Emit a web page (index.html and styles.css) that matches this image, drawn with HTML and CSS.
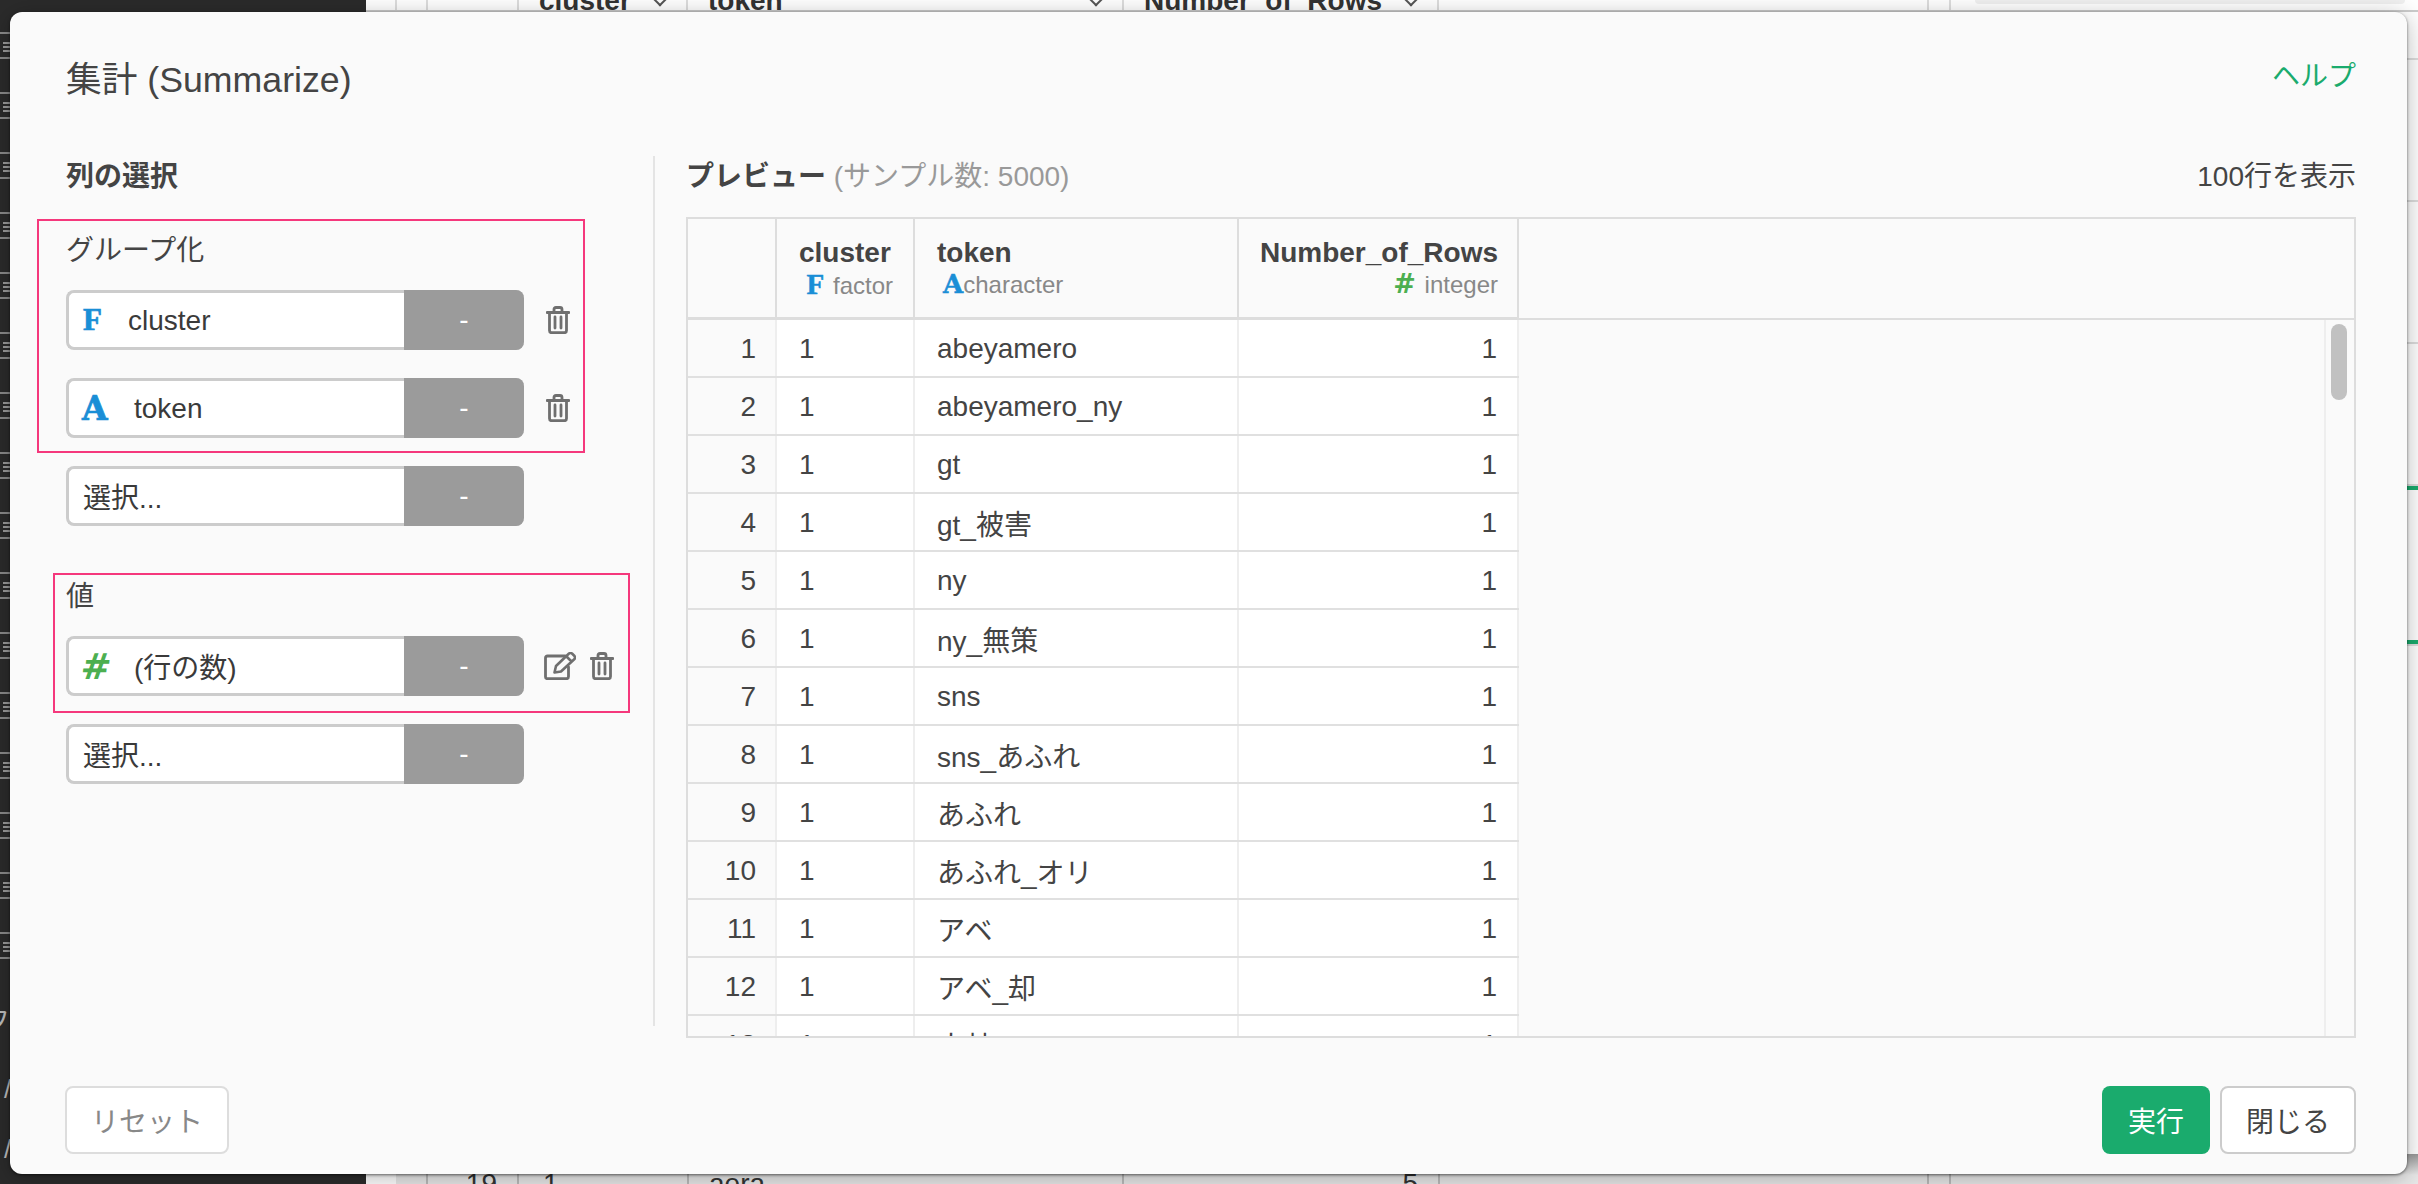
FILE: index.html
```html
<!DOCTYPE html>
<html lang="ja">
<head>
<meta charset="utf-8">
<title>集計 (Summarize)</title>
<link rel="stylesheet" href="styles.css">
</head>
<body>
<svg class="defs" width="0" height="0" aria-hidden="true">
  <symbol id="trash" viewBox="0 0 24 28">
    <path d="M1 6.5h22M8 6V3.5Q8 1.500 10 1.500h4Q16 1.500 16 3.500V6M3.500 7v17.500Q3.500 26.700 5.500 26.700h13Q20.500 26.700 20.500 24.500V7M9 11v11M15 11v11" fill="none" stroke="#6f6f6f" stroke-width="2.800" stroke-linecap="round"/>
  </symbol>
  <symbol id="edit" viewBox="0 0 32 28">
    <path d="M21 4H3.500Q1.500 4 1.500 6v19Q1.500 26.700 3.500 26.700h19Q24.500 26.700 24.500 24.500V15" fill="none" stroke="#6f6f6f" stroke-width="2.800" stroke-linecap="round"/>
    <path d="M10.500 20.500l1.500-6.500L25 1.500q1.500-1 3 0l2.500 2.500q1 1.500 0 3L17 19.500zM22.500 4.500l5.500 5.500" fill="none" stroke="#6f6f6f" stroke-width="2.600" stroke-linejoin="round"/>
  </symbol>
</svg>

<div class="app">
  <aside class="side">
    <div class="side-list"></div>
    <div class="side-text side-kana">フ</div>
    <div class="side-text side-a">く/</div>
    <div class="side-text side-b">く/</div>
  </aside>
  <main class="main">
    <div class="bg-head">
      <div class="bg-c bg-w31"></div>
      <div class="bg-c bg-w31"></div>
      <div class="bg-c bg-w91"></div>
      <div class="bg-c bg-w169">cluster<span class="chev"></span></div>
      <div class="bg-c bg-w436">token<span class="chev"></span></div>
      <div class="bg-c bg-w315">Number_of_Rows<span class="chev"></span></div>
      <div class="bg-c bg-w490"></div>
      <div class="bg-c bg-w22"></div>
      <div class="bg-panel"></div>
    </div>
    <div class="bg-rail">
      <div class="rail-line g1"></div>
      <div class="rail-line g2"></div>
    </div>
    <div class="bg-foot">
      <div class="ft ft-w32"></div>
      <div class="ft ft-w91 ft-num">19</div>
      <div class="ft ft-w170">1</div>
      <div class="ft ft-w435">aera</div>
      <div class="ft ft-w316 ft-num">5</div>
      <div class="ft ft-w489"></div>
      <div class="ft ft-w22"></div>
    </div>
  </main>
</div>

<section class="modal">
  <header class="modal-head">
    <h1 class="title">集計 (Summarize)</h1>
    <a class="help">ヘルプ</a>
  </header>

  <div class="modal-body">
    <div class="left">
      <h2 class="heading left-heading">列の選択</h2>
      <div class="label">グループ化</div>
      <div class="row">
        <div class="sel"><span class="type f">F</span><span class="sel-text t1">cluster</span><span class="sel-btn">-</span></div>
        <svg class="ico trash"><use href="#trash"/></svg>
      </div>
      <div class="row">
        <div class="sel"><span class="type a">A</span><span class="sel-text t2 t-low">token</span><span class="sel-btn">-</span></div>
        <svg class="ico trash"><use href="#trash"/></svg>
      </div>
      <div class="row">
        <div class="sel"><span class="sel-text t0">選択...</span><span class="sel-btn">-</span></div>
      </div>
      <div class="label label-val">値</div>
      <div class="row">
        <div class="sel"><span class="type h">#</span><span class="sel-text t2">(行の数)</span><span class="sel-btn">-</span></div>
        <svg class="ico edit"><use href="#edit"/></svg>
        <svg class="ico trash trash-b"><use href="#trash"/></svg>
      </div>
      <div class="row">
        <div class="sel"><span class="sel-text t0">選択...</span><span class="sel-btn">-</span></div>
      </div>
      <div class="mark mark-a"></div>
      <div class="mark mark-b"></div>
    </div>

    <div class="right">
      <div class="right-head">
        <h2 class="heading">プレビュー <span class="sample">(サンプル数: 5000)</span></h2>
        <span class="count">100行を表示</span>
      </div>
      <div class="grid">
        <div class="grid-head">
          <div class="hc"></div>
          <div class="hc"><b>cluster</b><span class="sub sub-r"><i class="mini f">F</i> factor</span></div>
          <div class="hc"><b>token</b><span class="sub sub-l"><i class="mini a">A</i>character</span></div>
          <div class="hc hc-num"><b>Number_of_Rows</b><span class="sub"><i class="mini h">#</i> integer</span></div>
        </div>
        <div class="grid-body">
          <div class="rows">
            <div class="tr"><span>1</span><span>1</span><span>abeyamero</span><span>1</span></div>
            <div class="tr"><span>2</span><span>1</span><span>abeyamero_ny</span><span>1</span></div>
            <div class="tr"><span>3</span><span>1</span><span>gt</span><span>1</span></div>
            <div class="tr"><span>4</span><span>1</span><span>gt_被害</span><span>1</span></div>
            <div class="tr"><span>5</span><span>1</span><span>ny</span><span>1</span></div>
            <div class="tr"><span>6</span><span>1</span><span>ny_無策</span><span>1</span></div>
            <div class="tr"><span>7</span><span>1</span><span>sns</span><span>1</span></div>
            <div class="tr"><span>8</span><span>1</span><span>sns_あふれ</span><span>1</span></div>
            <div class="tr"><span>9</span><span>1</span><span>あふれ</span><span>1</span></div>
            <div class="tr"><span>10</span><span>1</span><span>あふれ_オリ</span><span>1</span></div>
            <div class="tr"><span>11</span><span>1</span><span>アベ</span><span>1</span></div>
            <div class="tr"><span>12</span><span>1</span><span>アベ_却</span><span>1</span></div>
            <div class="tr"><span>13</span><span>1</span><span>大林</span><span>1</span></div>
          </div>
          <div class="scroll"><div class="thumb"></div></div>
        </div>
      </div>
    </div>
  </div>

  <footer class="modal-foot">
    <button class="btn btn-reset">リセット</button>
    <div class="foot-right">
      <button class="btn btn-run">実行</button>
      <button class="btn btn-close">閉じる</button>
    </div>
  </footer>
</section>
</body>
</html>
```

FILE: styles.css
```css
* { box-sizing: border-box; }
html, body { margin: 0; height: 100%; overflow: hidden; }
body {
  width: 2418px; height: 1184px; position: relative;
  font-family: "Liberation Sans", "Noto Sans CJK JP", sans-serif;
  font-size: 28px; color: #444; background: #fff;
}
.defs { position: absolute; }

/* app behind the dialog */
.app { display: flex; width: 2418px; height: 1184px; }
.side { width: 366px; background: #2b2b2b; position: relative; flex: none; overflow: hidden; }
.side-list {
  margin-top: 32px; height: 960px;
  background:
    repeating-linear-gradient(to bottom, transparent 0 10px, #999 10px 12px, transparent 12px 14px, #999 14px 16px, transparent 16px 18px, #999 18px 20px, transparent 20px 60px) 3px 0 / 7px 100% no-repeat,
    repeating-linear-gradient(to bottom, #8a8a8a 0 2px, transparent 2px 25px, #8a8a8a 25px 27px, transparent 27px 60px) 0 0 / 10px 100% no-repeat;
}
.side-text { position: absolute; color: #bbb; font-size: 26px; line-height: 30px; white-space: nowrap; }
.side-kana { top: 1006px; left: -16px; }
.side-a { top: 1074px; left: -22px; }
.side-b { top: 1134px; left: -22px; }
.main { flex: 1; position: relative; display: flex; flex-direction: column; justify-content: space-between; background: #fff; }
.bg-head { display: flex; height: 12px; border-bottom: 2px solid #ccc; overflow: hidden; }
.bg-c { height: 12px; line-height: 2px; font-weight: 700; color: #333; border-right: 2px solid #ddd; flex: none; padding-left: 20px; position: relative; }
.bg-w31 { width: 31px; }
.bg-w91 { width: 91px; }
.bg-w169 { width: 169px; }
.bg-w436 { width: 436px; }
.bg-w315 { width: 315px; }
.bg-w490 { width: 490px; }
.bg-w22 { width: 22px; }
.bg-panel { position: absolute; left: 1609px; top: 0; width: 430px; height: 4px; background: #f0f0f0; border-radius: 0 0 6px 6px; }
.chev { position: absolute; right: 20px; top: -8px; width: 12px; height: 12px; border-right: 2px solid #555; border-bottom: 2px solid #555; transform: rotate(45deg); }
.bg-rail { position: absolute; right: 0; top: 0; width: 12px; height: 700px; background: repeating-linear-gradient(to bottom, transparent 0 58px, #ddd 58px 60px, transparent 60px 142px) 0 0 / 100% 400px no-repeat; }
.rail-line { position: absolute; left: 0; right: 0; height: 4px; background: #1aab6d; }
.g1 { top: 486px; box-shadow: 0 -2px 0 #ddd; }
.g2 { top: 640px; box-shadow: 0 2px 0 #ddd; }
.bg-foot { display: flex; height: 30px; margin-left: 30px; background: linear-gradient(#999, #e8e8e8 70%); color: #333; overflow: hidden; }
.ft { border-right: 2px solid #bbb; padding: 0 20px; line-height: 60px; flex: none; }
.ft-w32 { width: 32px; padding: 0; }
.ft-w91 { width: 91px; }
.ft-w170 { width: 170px; padding-left: 24px; }
.ft-w435 { width: 435px; }
.ft-w316 { width: 316px; }
.ft-w489 { width: 489px; }
.ft-w22 { width: 22px; padding: 0; }
.ft-num { text-align: right; }

/* dialog */
.modal {
  position: absolute; left: 10px; top: 12px; width: 2397px; height: 1162px;
  background: #fafafa; border-radius: 12px;
  box-shadow: 0 1px 3px rgba(0,0,0,.55), 0 4px 24px rgba(0,0,0,.28);
  padding: 0 51px 0 56px;
  display: flex; flex-direction: column;
}
.modal-head { height: 144px; display: flex; justify-content: space-between; flex: none; padding-top: 46px; }
.title { margin: 0; font-size: 35.7px; font-weight: 400; line-height: 44px; color: #444; }
.help { color: #1aab6d; font-size: 28px; line-height: 44px; margin-top: -3px; }
.modal-body { display: flex; height: 882px; flex: none; align-items: flex-start; }

.left { width: 589px; height: 870px; border-right: 2px solid #e4e4e4; position: relative; flex: none; }
.heading { margin: 0; font-size: 28px; font-weight: 700; line-height: 42px; color: #444; }
.left-heading { margin-bottom: 32px; }
.label { line-height: 42px; margin-bottom: 18px; color: #444; }
.label-val { margin-top: 50px; }
.row { display: flex; align-items: center; height: 60px; margin-bottom: 28px; }
.sel { width: 458px; height: 60px; display: flex; align-items: center; background: #fff; border: 3px solid #ccc; border-right: 0; border-radius: 8px; position: relative; flex: none; }
.sel-text { color: #3a3a3a; flex: 1; white-space: nowrap; }
.t0 { padding-left: 14px; }
.t1 { padding: 2px 0 0 22px; }
.t2 { padding-left: 26px; }
.t-low { padding-top: 2px; }
.sel-btn { width: 120px; align-self: stretch; margin: -3px 0; display: flex; align-items: center; justify-content: center; background: #9b9b9b; color: #fff; border-radius: 0 8px 8px 0; font-size: 28px; flex: none; }
.type { font-weight: 700; color: #1a8ed6; flex: none; padding-left: 14px; -webkit-text-stroke: .7px currentColor; }
.type.f { font-family: "Liberation Serif", serif; font-size: 31px; width: 37px; }
.type.a { font-family: "DejaVu Serif", serif; font-size: 33px; padding-left: 13px; width: 39px; }
.type.h { font-family: "DejaVu Sans", sans-serif; font-size: 36px; color: #4caf50; width: 39px; padding-left: 12px; transform: skewX(-6deg); -webkit-text-stroke: 0; }
.ico { flex: none; height: 28px; }
.trash { width: 24px; margin-left: 22px; }
.edit { width: 32px; margin-left: 20px; }
.trash-b { margin-left: 14px; }
.mark { position: absolute; border: 2px solid #f5387c; pointer-events: none; }
.mark-a { left: -29px; top: 63px; width: 548px; height: 234px; }
.mark-b { left: -13px; top: 417px; width: 577px; height: 140px; }

.right { flex: 1; padding-left: 31px; min-width: 0; }
.right-head { display: flex; justify-content: space-between; align-items: flex-start; height: 42px; margin-bottom: 19px; }
.sample { font-weight: 400; color: #999; }
.count { color: #444; line-height: 42px; }
.grid { height: 821px; border: 2px solid #ddd; display: flex; flex-direction: column; overflow: hidden; }
.grid-head { display: grid; grid-template-columns: 89px 138px 324px 280px; height: 101px; flex: none; box-shadow: inset 0 -2px 0 #ddd; }
.hc { height: 101px; border-right: 2px solid #ddd; border-bottom: 3px solid #ddd; padding: 18px 19px 0 22px; display: flex; flex-direction: column; line-height: 32px; color: #444; }
.hc b { font-weight: 700; white-space: nowrap; }
.hc-num { text-align: right; padding-left: 10px; }
.sub { font-size: 24px; color: #888; line-height: 30px; white-space: nowrap; }
.sub-r { text-align: right; margin-right: 1px; }
.sub-l { padding-left: 6px; }
.mini { font-style: normal; font-weight: 700; color: #1a8ed6; }
.mini.f { font-family: "Liberation Serif", serif; font-size: 29px; margin-right: 2px; -webkit-text-stroke: .5px currentColor; }
.mini.a { font-family: "DejaVu Serif", serif; font-size: 26px; -webkit-text-stroke: .5px currentColor; }
.mini.h { font-family: "DejaVu Sans", sans-serif; color: #4caf50; font-size: 27px; margin-right: 2px; }
.grid-body { flex: 1; display: flex; justify-content: space-between; overflow: hidden; min-height: 0; }
.rows { width: 831px; flex: none; }
.tr { display: grid; grid-template-columns: 89px 138px 324px 280px; height: 58px; background: #fff; border-bottom: 2px solid #e0e0e0; color: #444; }
.tr span { display: flex; align-items: center; padding: 1px 20px 0 22px; border-right: 2px solid #eee; white-space: nowrap; }
.tr span:first-child { justify-content: flex-end; background: #fafafa; padding-right: 19px; }
.tr span:nth-child(4) { justify-content: flex-end; }
.scroll { width: 30px; flex: none; border-left: 2px solid #eee; padding: 4px 5px 0 5px; }
.thumb { width: 16px; height: 76px; background: #c1c1c1; border-radius: 8px; }

.modal-foot { display: flex; justify-content: space-between; padding-top: 48px; flex: none; }
.foot-right { display: flex; gap: 10px; }
.btn { height: 68px; font: inherit; border-radius: 8px; background: #fff; padding: 0; color: #444; }
.btn-reset { width: 164px; border: 2px solid #ddd; color: #888; margin-left: -1px; }
.btn-run { width: 108px; border: 0; background: #1aab6d; color: #fff; }
.btn-close { width: 136px; border: 2px solid #ccc; }
```
